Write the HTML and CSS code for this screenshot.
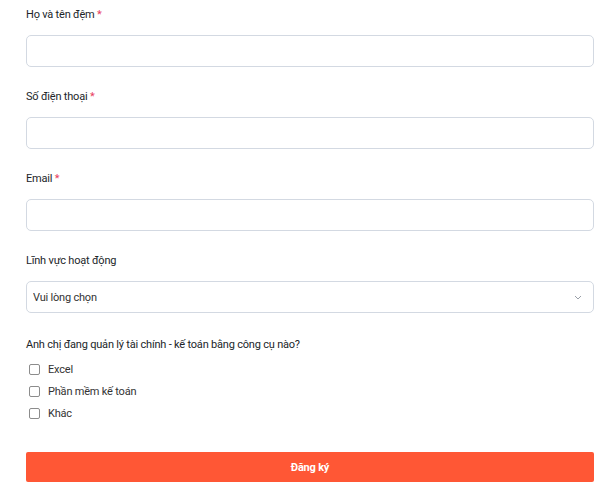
FILE: index.html
```html
<!DOCTYPE html>
<html lang="vi">
<head>
  <meta charset="UTF-8">
  <meta name="viewport" content="width=device-width, initial-scale=1.0">
  <title>Đăng ký</title>
  <link rel="stylesheet" href="styles.css">
</head>
<body>
  <form class="signup-form">
    <div class="field">
      <label for="fullName">Họ và tên đệm <span class="req">*</span></label>
      <input type="text" id="fullName">
    </div>

    <div class="field">
      <label for="phone">Số điện thoại <span class="req">*</span></label>
      <input type="text" id="phone">
    </div>

    <div class="field">
      <label for="email">Email <span class="req">*</span></label>
      <input type="text" id="email">
    </div>

    <div class="field">
      <label for="sector">Lĩnh vực hoạt động</label>
      <div class="select-box">
        <select id="sector">
          <option>Vui lòng chọn</option>
        </select>
        <svg class="chevron" width="8" height="5" viewBox="0 0 8 5">
          <path d="M1 1l3 3 3-3" fill="none" stroke="#9aa0a8" stroke-width="1"/>
        </svg>
      </div>
    </div>

    <div class="field field-last">
      <label>Anh chị đang quản lý tài chính - kế toán bằng công cụ nào?</label>
      <div class="options">
        <label class="option"><input type="checkbox"> Excel</label>
        <label class="option"><input type="checkbox"> Phần mềm kế toán</label>
        <label class="option"><input type="checkbox"> Khác</label>
      </div>
    </div>

    <button type="button" class="submit">Đăng ký</button>
  </form>
</body>
</html>
```

FILE: styles.css
```css
body {
  margin: 0;
  background: #fff;
  font-family: Roboto, "Liberation Sans", sans-serif;
  font-size: 11px;
  letter-spacing: -0.2px;
  color: #212529;
}

.signup-form {
  width: 568px;
  padding: 6px 0 0 26px;
}

.field {
  margin-bottom: 21px;
}

.field > label {
  display: block;
  line-height: 17px;
  margin-bottom: 12px;
}

.req {
  color: #e8405e;
}

input[type="text"],
select {
  display: block;
  width: 100%;
  height: 32px;
  box-sizing: border-box;
  border: 1px solid #d3d9e2;
  border-radius: 5px;
  background: #fff;
  font-family: inherit;
  font-size: 11px;
  letter-spacing: -0.2px;
  color: #333;
  outline: none;
}

.select-box {
  position: relative;
}

select {
  appearance: none;
  padding: 0 6px;
}

.chevron {
  position: absolute;
  right: 12px;
  top: 14px;
}

.field-last {
  margin-top: 23px;
  margin-bottom: 28px;
}

.field-last > label {
  margin-bottom: 5px;
}

.option {
  display: flex;
  align-items: center;
  height: 22px;
  color: #333;
}

.option input {
  appearance: none;
  width: 11px;
  height: 11px;
  margin: 0 8px 0 3px;
  border: 1px solid #8c8c8c;
  border-radius: 2px;
  background: #fff;
}

.submit {
  display: block;
  width: 100%;
  height: 30px;
  border: none;
  border-radius: 2px;
  background: #ff5735;
  color: #fff;
  font-family: inherit;
  font-size: 11px;
  letter-spacing: -0.2px;
  font-weight: bold;
  cursor: pointer;
}
```
